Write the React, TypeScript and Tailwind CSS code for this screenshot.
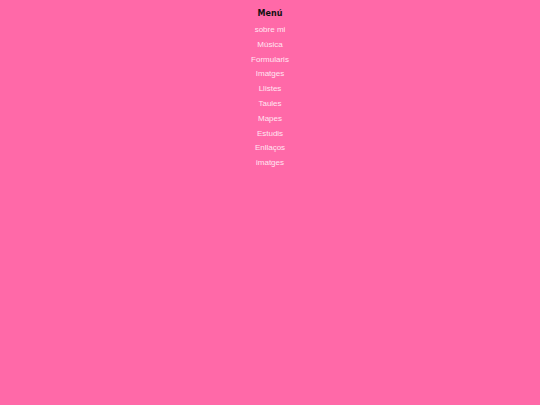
export default function App() {
  const items = ["sobre mi", "Música", "Formularis", "Imatges", "Llistes", "Taules", "Mapes", "Estudis", "Enllaços", "imatges"];
  return (
    <div className="min-h-[405px] w-full bg-[#ff69a8] flex flex-col items-center pt-[8px]" style={{ fontFamily: '"Liberation Sans", Arial, sans-serif' }}>
      <div className="text-[8px] font-bold text-[#111] leading-[12px]" style={{ fontFamily: '"DejaVu Sans", sans-serif' }}>Menú</div>
      <ul className="flex flex-col items-center mt-[3px]">
        {items.map((t) => (
          <li key={t} className="text-[8px] leading-[14.8px] text-[#ffe6f2]">
            <a>{t}</a>
          </li>
        ))}
      </ul>
    </div>
  );
}
